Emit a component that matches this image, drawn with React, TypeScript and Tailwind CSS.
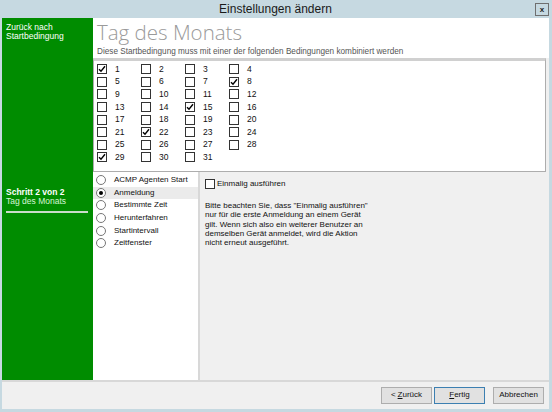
import React from 'react'

const days = Array.from({ length: 31 }, (_, i) => i + 1)
const checkedDays = [1, 8, 15, 22, 29]

const triggers = [
  'ACMP Agenten Start',
  'Anmeldung',
  'Bestimmte Zeit',
  'Herunterfahren',
  'Startintervall',
  'Zeitfenster',
]

function CheckBox({ checked }: { checked?: boolean }) {
  return (
    <span className="w-[10px] h-[10px] border border-[#333] bg-white flex items-center justify-center shrink-0">
      {checked && (
        <svg width="8" height="8" viewBox="0 0 8 8">
          <path d="M1 4.2 L3 6.3 L7 1.3" fill="none" stroke="#000" strokeWidth="1.4" />
        </svg>
      )}
    </span>
  )
}

function Radio({ checked }: { checked?: boolean }) {
  return (
    <span className="w-[10px] h-[10px] rounded-full border border-[#777] bg-white flex items-center justify-center shrink-0">
      {checked && <span className="w-[4px] h-[4px] rounded-full bg-black" />}
    </span>
  )
}

function Button({ children, focused }: { children: React.ReactNode; focused?: boolean }) {
  return (
    <button
      className={`w-[51px] h-[17px] text-[8px] text-[#111] bg-[#e1e1e1] border flex items-center justify-center ${
        focused ? 'border-[#3c7fb1]' : 'border-[#adadad]'
      }`}
    >
      {children}
    </button>
  )
}

export default function App() {
  return (
    <div
      className="w-[552px] h-[412px] bg-[#c6d9e1] flex flex-col pl-[2px] pr-[3px] pb-[3px] overflow-hidden"
      style={{ fontFamily: '"Liberation Sans", "Noto Sans", sans-serif' }}
    >
      {/* Titelleiste */}
      <div className="h-[18px] relative flex items-center justify-center shrink-0">
        <span className="text-[12px] text-[#1a1a1a]">Einstellungen ändern</span>
        <span className="absolute right-0 top-[3px] w-[14px] h-[13px] border border-[#6f6f6f] flex items-center justify-center text-[8px] font-bold text-[#222]">
          x
        </span>
      </div>

      <div className="flex-1 flex flex-col bg-[#f0f0f0]">
        <div className="flex-1 flex">
          {/* Seitenleiste */}
          <div className="w-[91px] bg-[#008c00] text-white flex flex-col px-[4px] pt-[5px]">
            <div className="text-[8.5px] leading-[9px]">
              Zurück nach
              <br />
              Startbedingung
            </div>
            <div className="mt-[147px] text-[8.5px] leading-[9px]">
              <div className="font-bold">Schritt 2 von 2</div>
              <div className="text-[#d6f5d6]">Tag des Monats</div>
            </div>
            <div className="mt-[5px] h-[1.5px] bg-[#c9dcc9] mr-[1px]" />
          </div>

          {/* Inhalt */}
          <div className="flex-1 flex flex-col">
            <div className="bg-white h-[40px] px-[4px] pt-[2px]">
              <div
                className="text-[20.5px] leading-[24px] text-[#9a9a9a] font-light"
                style={{ fontFamily: '"Open Sans", "Liberation Sans", sans-serif' }}
              >
                Tag des Monats
              </div>
              <div className="mt-[3px] text-[8.2px] leading-[10px] text-[#555]">
                Diese Startbedingung muss mit einer der folgenden Bedingungen kombiniert werden
              </div>
            </div>

            <div className="bg-white h-[114px] mr-[3px] border border-[#adadad] border-t-[3px] border-t-[#d0d0d0] pt-[2px] pl-[3px]">
              <div className="grid grid-cols-[44px_44px_44px_44px] auto-rows-[12.57px]">
                {days.map((d) => (
                  <div key={d} className="flex items-center">
                    <CheckBox checked={checkedDays.includes(d)} />
                    <span className="ml-[8px] text-[8.5px] text-[#111]">{d}</span>
                  </div>
                ))}
              </div>
            </div>

            <div className="flex-1 flex">
              <div className="w-[107px] bg-white border-r-[2px] border-[#d8d8d8] pt-[2px]">
                {triggers.map((t, i) => (
                  <div
                    key={t}
                    className={`h-[12.6px] flex items-center pl-[3px] ${i === 1 ? 'bg-[#ebebeb]' : ''}`}
                  >
                    <Radio checked={i === 1} />
                    <span className="ml-[8px] text-[8px] text-[#111]">{t}</span>
                  </div>
                ))}
              </div>
              <div className="flex-1 px-[5px] pt-[6px]">
                <div className="flex items-center">
                  <CheckBox />
                  <span className="ml-[2px] text-[8px] text-[#111]">Einmalig ausführen</span>
                </div>
                <p className="mt-[11px] w-[170px] text-[8px] leading-[9.3px] text-[#111]">
                  Bitte beachten Sie, dass "Einmalig ausführen" nur für die erste Anmeldung an einem Gerät
                  gilt. Wenn sich also ein weiterer Benutzer an demselben Gerät anmeldet, wird die Aktion
                  nicht erneut ausgeführt.
                </p>
              </div>
            </div>
          </div>
        </div>

        {/* Fußleiste */}
        <div className="h-[29px] shrink-0 border-t-[2px] border-[#d8d8d8] flex items-center justify-end pr-[5px] pb-[1px]">
          <div className="flex items-center">
            <Button>
              &lt; <span className="underline ml-[2px]">Z</span>urück
            </Button>
            <span className="w-[2px]" />
            <Button focused>
              <span className="underline">F</span>ertig
            </Button>
            <span className="w-[8px]" />
            <Button>Abbrechen</Button>
          </div>
        </div>
      </div>
    </div>
  )
}
